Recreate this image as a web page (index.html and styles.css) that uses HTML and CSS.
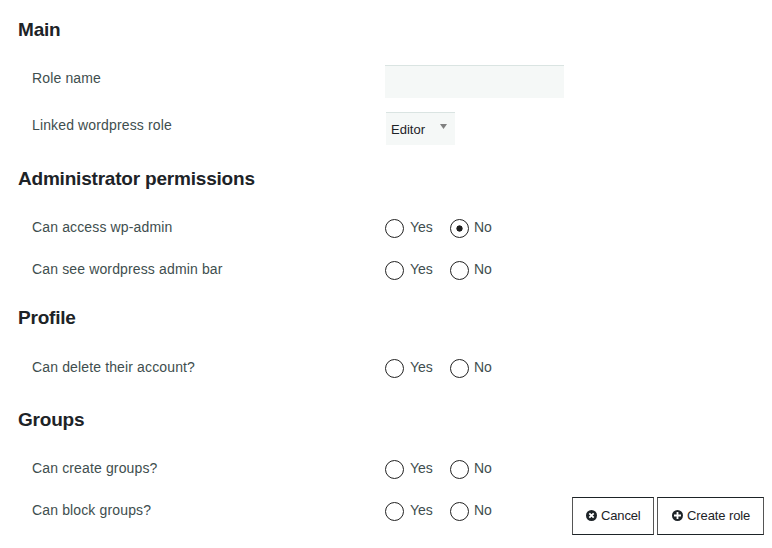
FILE: index.html
```html
<!DOCTYPE html>
<html lang="en">
<head>
    <meta charset="UTF-8">
    <title>Create role</title>
    <link rel="stylesheet" href="styles.css">
</head>
<body>

<form class="role-form">
    <!-- Main -->
    <section class="main">
        <h2>Main</h2>
        <div class="row name-row">
            <label for="role_name">Role name</label>
            <input type="text" id="role_name" class="text-input">
        </div>
        <div class="row">
            <label>Linked wordpress role</label>
            <div class="select">Editor <span class="arrow"></span></div>
        </div>
    </section>

    <!-- Administrator permissions -->
    <section class="admin">
        <h2>Administrator permissions</h2>
        <div class="row">
            <span>Can access wp-admin</span>
            <div class="options">
                <label><input type="radio" name="wp_admin"> Yes</label>
                <label><input type="radio" name="wp_admin" checked> No</label>
            </div>
        </div>
        <div class="row">
            <span>Can see wordpress admin bar</span>
            <div class="options">
                <label><input type="radio" name="admin_bar"> Yes</label>
                <label><input type="radio" name="admin_bar"> No</label>
            </div>
        </div>
    </section>

    <!-- Profile -->
    <section class="profile">
        <h2>Profile</h2>
        <div class="row">
            <span>Can delete their account?</span>
            <div class="options">
                <label><input type="radio" name="delete_account"> Yes</label>
                <label><input type="radio" name="delete_account"> No</label>
            </div>
        </div>
    </section>

    <!-- Groups -->
    <section class="groups">
        <h2>Groups</h2>
        <div class="row">
            <span>Can create groups?</span>
            <div class="options">
                <label><input type="radio" name="create_groups"> Yes</label>
                <label><input type="radio" name="create_groups"> No</label>
            </div>
        </div>
        <div class="row">
            <span>Can block groups?</span>
            <div class="options">
                <label><input type="radio" name="block_groups"> Yes</label>
                <label><input type="radio" name="block_groups"> No</label>
            </div>
        </div>
    </section>

    <div class="actions">
        <button type="button" class="cancel">
            <svg width="11" height="11" viewBox="0 0 11 11"><circle cx="5.5" cy="5.5" r="5.5" fill="#1d2327"/><path d="M3.3 3.3l4.4 4.4M7.7 3.3l-4.4 4.4" stroke="#fff" stroke-width="1.8"/></svg>
            Cancel
        </button>
        <button type="submit" class="create">
            <svg width="11" height="11" viewBox="0 0 11 11"><circle cx="5.5" cy="5.5" r="5.5" fill="#1d2327"/><path d="M5.5 2v7M2 5.5h7" stroke="#fff" stroke-width="1.8"/></svg>
            Create role
        </button>
    </div>
</form>

</body>
</html>
```

FILE: styles.css
```css
* {
    box-sizing: border-box;
}
body {
    margin: 0;
    background-color: #fff;
    color: #404e4e;
    font-family: "Liberation Sans", Arial, sans-serif;
    font-size: 14px;
    line-height: 20px;
}
.role-form {
    position: relative;
    height: 548px;
    padding: 18px 8px 0 18px;
    overflow: hidden;
}
h2 {
    margin: 0;
    color: #1d2327;
    font-size: 19px;
    line-height: 24px;
    letter-spacing: -0.2px;
}
.main {
    height: 149px;
}
.admin {
    height: 139px;
}
.profile {
    height: 102px;
}
.row {
    display: grid;
    grid-template-columns: 353px 1fr;
    height: 42px;
    padding-left: 14px;
    letter-spacing: 0.14px;
}
h2 + .row {
    margin-top: 26px;
}
.profile .row {
    margin-top: 27px;
}
.name-row {
    height: 47px;
}
.text-input {
    width: 179px;
    height: 33px;
    margin-top: -3px;
    border: 0;
    border-top: 1px solid #dae4e2;
    background-color: #f5f8f7;
}
.select {
    display: flex;
    justify-content: space-between;
    width: 69px;
    height: 33px;
    margin-top: -3px;
    margin-left: 1px;
    padding: 7px 8px 0 5px;
    border-top: 1px solid #dae4e2;
    background-color: #f5f8f7;
    color: #1d2327;
    font-size: 13px;
    letter-spacing: 0;
}
.arrow {
    width: 7px;
    height: 5px;
    margin-top: 4px;
    background-color: #808080;
    clip-path: polygon(0 0, 100% 0, 50% 100%);
}
.options {
    display: flex;
    letter-spacing: 0;
}
.options label {
    display: flex;
    width: 65px;
    gap: 6px;
}
.options label + label {
    gap: 5px;
}
input[type="radio"] {
    appearance: none;
    flex: none;
    width: 19px;
    height: 19px;
    margin: 2px 0 0;
    border: 1px solid #222;
    border-radius: 50%;
}
input[type="radio"]:checked {
    background: radial-gradient(circle, #1d1d1d 2.8px, transparent 3.4px);
}
.actions {
    position: absolute;
    right: 8px;
    bottom: 13px;
    display: flex;
    gap: 3px;
}
button {
    display: flex;
    align-items: center;
    gap: 4px;
    height: 38px;
    padding: 0 0 1px 13px;
    border: 1px solid #1d2327;
    border-left-color: #555;
    border-right-color: #555;
    background-color: #fff;
    color: #1d2327;
    font: 13px "Liberation Sans", Arial, sans-serif;
    letter-spacing: -0.15px;
}
.cancel {
    width: 82px;
}
.create {
    width: 107px;
    padding-left: 14px;
    letter-spacing: -0.1px;
}
```
